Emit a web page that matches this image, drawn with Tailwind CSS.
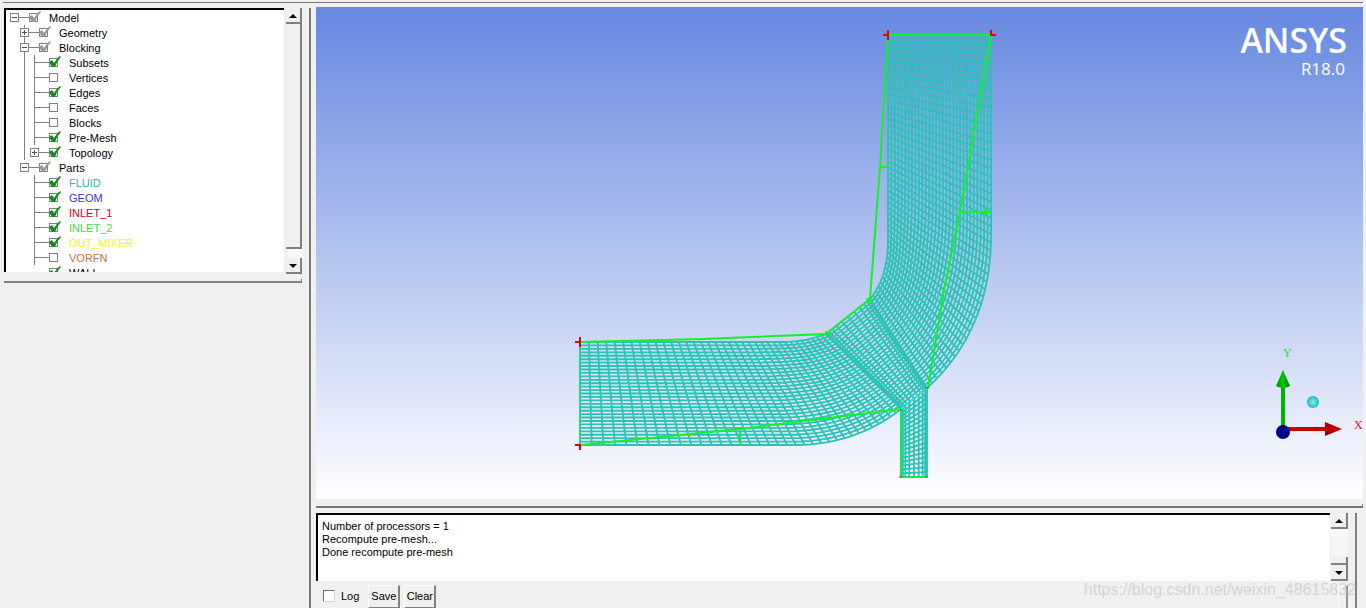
<!DOCTYPE html>
<html lang="en">

<head>
	<meta charset="UTF-8">
	<meta name="viewport" content="width=device-width, initial-scale=1.0">
	<title>Pre-mesh viewer</title>
	<script src="https://cdn.jsdelivr.net/npm/@tailwindcss/browser@4"></script>
</head>

<body class="flex flex-col h-screen overflow-hidden bg-[#f0f0f0] font-['Liberation_Sans',Arial,sans-serif] text-[11px] text-black">
	<div class="mt-0.5 mx-[3px] h-px shrink-0 bg-[#777777]"></div>
	<div class="flex flex-1 min-h-0 pt-1">

		<!-- Model tree -->
		<aside class="w-[298px] shrink-0 ml-1 mt-px">
			<div class="flex items-start gap-0.5">
				<div class="flex-1 h-[264px] overflow-hidden bg-white border-t-2 border-l-2 border-black">
					<ul id="tree"></ul>
				</div>
				<div class="flex flex-col w-4 h-[266px] bg-[#f7f7f7]">
					<button aria-label="Scroll up" class="flex items-center justify-center h-4 pt-0.5 bg-[#f0f0f0] border-r-2 border-b-2 border-[#808080]">
						<svg class="w-2 h-1" viewBox="0 0 8 4"><path d="M4 0L8 4H0z" /></svg>
					</button>
					<div class="h-[225px] bg-[#f0f0f0] border-r-2 border-b-2 border-[#808080]"></div>
					<button aria-label="Scroll down" class="flex items-center justify-center h-4 pt-0.5 mt-auto bg-[#f0f0f0] border-r-2 border-b-2 border-[#808080]">
						<svg class="w-2 h-1" viewBox="0 0 8 4"><path d="M0 0H8L4 4z" /></svg>
					</button>
				</div>
			</div>
			<div class="mt-[5px] h-1 border-b-2 border-r border-[#808080]"></div>
		</aside>

		<div class="w-0.5 ml-[7px] mt-px shrink-0 bg-[#777777]"></div>

		<main class="flex flex-col flex-1 min-w-0 ml-[5px] mr-[3px]">
			<!-- Graphics window -->
			<div class="relative flex-1 min-h-0 bg-linear-to-b/srgb from-[#6688e0] to-white">
				<svg class="block w-full h-full" viewBox="316 7 1047 492" preserveAspectRatio="xMaxYMid meet">
					<path id="mesh" fill="none" stroke="#2cc2b6" stroke-width="1.85" />
					<g fill="none" stroke="#14f02c" stroke-width="2">
						<path d="M888 35H991" />
						<path d="M888 35L880 167L870 299L826 334L703 339L580 342" />
						<path d="M991 35L960 212L944 290L928 388" />
						<path d="M580 445L740 429L901 409" />
						<path d="M901 409V477M901 477H927" stroke-width="1.5" />
						<path d="M580 342V445" stroke-width="1" stroke-dasharray="3 3" />
						<path d="M880 167H888M960 212H991M740 429V444" />
						<path d="M866 299H874M870 295V303M822 334H830M826 331V338" stroke-width="1.5" />
					</g>
					<path d="M984 208L991 212L984 216z" fill="#14f02c" />
					<path d="M901 409L927 388" stroke="#20f0f0" stroke-width="1.5" stroke-dasharray="4 2" />
					<path d="M883 35H888M888 30V40M991 30V35H996M575 342H580M580 337V347M575 445H580V450" fill="none" stroke="#e00010" stroke-width="2" />
					<path d="M925 388H929M899 477H902M926 477H928M900 410H902" stroke="#a03020" stroke-width="1" />

					<!-- Axis triad -->
					<defs>
						<radialGradient id="ball"><stop offset="0" stop-color="#7ff4f4" /><stop offset="1" stop-color="#28b4bc" /></radialGradient>
						<linearGradient id="ycone"><stop offset="0" stop-color="#009400" /><stop offset=".5" stop-color="#00c800" /><stop offset="1" stop-color="#007800" /></linearGradient>
						<linearGradient id="xcone" x2="0" y2="1"><stop offset="0" stop-color="#8c0000" /><stop offset=".5" stop-color="#cc0000" /><stop offset="1" stop-color="#780000" /></linearGradient>
					</defs>
					<path d="M1281 386H1285V430H1281z" fill="#00b400" />
					<path d="M1283 370L1290 386Q1283 390 1276 386z" fill="url(#ycone)" />
					<path d="M1286 427H1326V431H1286z" fill="#c80000" />
					<path d="M1325 422L1342 429L1325 436z" fill="url(#xcone)" />
					<circle cx="1283" cy="432" r="7" fill="#000088" />
					<circle cx="1313" cy="402" r="6" fill="url(#ball)" />
					<g font-family="Liberation Serif, serif" font-size="12">
						<text x="1283" y="357" fill="#20d840">Y</text>
						<text x="1354" y="429" fill="#e01020">X</text>
					</g>
				</svg>
				<div class="absolute top-2.5 right-4 text-right text-white font-['Open_Sans',sans-serif]">
					<div class="text-[34px] leading-[46px] font-semibold">ANSYS</div>
					<div class="text-[17px] leading-3 pr-0.5">R18.0</div>
				</div>
			</div>

			<div class="mt-[5px] h-1 shrink-0 border-b-2 border-r border-[#777777]"></div>

			<!-- Message log -->
			<div class="flex mt-[5px] h-[95px] shrink-0">
				<div class="flex-1 min-w-0">
					<div class="flex gap-px">
						<div class="flex-1 h-[68px] pt-[5px] pl-1 leading-[13px] bg-white border-t-2 border-l-2 border-black">
							<p>Number of processors = 1</p>
							<p>Recompute pre-mesh...</p>
							<p>Done recompute pre-mesh</p>
						</div>
						<div class="flex flex-col w-[17px] bg-[#f7f7f7]">
							<button aria-label="Scroll log up" class="flex items-center justify-center h-4 pt-0.5 bg-[#f0f0f0] border-r-2 border-b-2 border-[#808080]">
								<svg class="w-2 h-1" viewBox="0 0 8 4"><path d="M4 0L8 4H0z" /></svg>
							</button>
							<div class="h-2 mt-auto bg-[#f0f0f0] border-r-2 border-b-2 border-[#808080]"></div>
							<button aria-label="Scroll log down" class="flex items-center justify-center h-4 pt-0.5 bg-[#f0f0f0] border-r-2 border-b-2 border-[#808080]">
								<svg class="w-2 h-1" viewBox="0 0 8 4"><path d="M0 0H8L4 4z" /></svg>
							</button>
						</div>
					</div>
					<div class="flex mt-1 h-6">
						<label class="flex items-center gap-1.5 ml-[7px] mr-[9px] h-[22px]">
							<input type="checkbox" class="appearance-none w-3 h-3 bg-white border border-[#d8d8d8] border-t-[#707070] border-l-[#707070] checked:bg-[#808080]">
							<span>Log</span>
						</label>
						<button class="w-8 bg-[#f0f0f0] border border-white border-r-2 border-b-2 border-r-[#808080] border-b-[#808080]">Save</button>
						<button class="w-8 ml-1 bg-[#f0f0f0] border border-white border-r-2 border-b-2 border-r-[#808080] border-b-[#808080]">Clear</button>
						<div class="w-2.5 ml-auto border border-white border-r-2 border-r-[#909090] border-b-[#909090]"></div>
					</div>
				</div>
				<div class="w-0.5 ml-[7px] mr-1.5 bg-[#808080]"></div>
			</div>
		</main>
	</div>

	<div class="absolute right-2.5 bottom-2 text-[16px] leading-5 text-[#d4d4d4] pointer-events-none">https://blog.csdn.net/weixin_48615832</div>

	<script>
		// state: on = green tick, mixed = grey tick, off = empty box
		const model = {
			name: 'Model', state: 'mixed', open: true, children: [
				{ name: 'Geometry', state: 'mixed', open: false },
				{
					name: 'Blocking', state: 'mixed', open: true, children: [
						{ name: 'Subsets', state: 'on' },
						{ name: 'Vertices', state: 'off' },
						{ name: 'Edges', state: 'on' },
						{ name: 'Faces', state: 'off' },
						{ name: 'Blocks', state: 'off' },
						{ name: 'Pre-Mesh', state: 'on' },
						{ name: 'Topology', state: 'on', open: false }
					]
				},
				{
					name: 'Parts', state: 'mixed', open: true, children: [
						{ name: 'FLUID', state: 'on', color: 'text-[#30b8b8]' },
						{ name: 'GEOM', state: 'on', color: 'text-[#3838b8]' },
						{ name: 'INLET_1', state: 'on', color: 'text-[#c00808]' },
						{ name: 'INLET_2', state: 'on', color: 'text-[#48d848]' },
						{ name: 'OUT_MIXER', state: 'on', color: 'text-[#f4f410]' },
						{ name: 'VORFN', state: 'off', color: 'text-[#c07048]' },
						{ name: 'WALL', state: 'on' }
					]
				}
			]
		};

		function renderRow(node) {
			const hasBox = node.open !== undefined;
			const tick = node.state === 'off' ? '' :
				`<svg class="absolute left-0 -top-0.5 w-3 h-3 pointer-events-none" viewBox="0 0 12 12"><path d="M0 6L3 4L5 7Q7 3 11 0L12 1Q8 5 6 11H3z" fill="${node.state === 'on' ? '#108c18' : '#989898'}"/></svg>`;
			const box = hasBox ?
				`<button aria-label="Toggle ${node.name}" class="-ml-[5px] w-[9px] h-[9px] bg-white border border-[#808080]"><svg class="block w-[7px] h-[7px]" viewBox="0 0 7 7"><path fill="#505050" d="${node.open ? 'M1 3H6V4H1z' : 'M1 3H3V1H4V3H6V4H4V6H3V4H1z'}"/></svg></button><span class="w-2.5 h-px bg-[#808080]"></span>` :
				'<span class="w-3.5 h-px bg-[#808080]"></span>';
			return `<div class="flex items-center h-[15px] whitespace-nowrap">${box}
				<label class="flex items-center gap-[11px]"><span class="relative flex"><input type="checkbox" ${node.state === 'on' ? 'checked' : ''} class="appearance-none w-[9px] h-[9px] bg-white border border-[#808080]">${tick}</span>
				<span class="pt-px ${node.color || 'text-black'}">${node.name}</span></label></div>`;
		}

		function renderNode(node, isEnd) {
			const kids = node.children ?
				`<ul class="ml-[9px]">${node.children.map((c, i) => renderNode(c, i === node.children.length - 1)).join('')}</ul>` : '';
			return `<li class="border-l ${isEnd ? 'border-transparent' : 'border-[#808080]'}">${renderRow(node)}${kids}</li>`;
		}
		const tree = document.getElementById('tree');
		tree.className = 'ml-2';
		tree.innerHTML = renderNode(model, true);

		// Mesh: each block is swept between two edges, every edge a sampled polyline
		function edge(straightFrom, straightTo, ctrl, end) {
			const pts = [straightFrom];
			for (let i = 0; i <= 40; i++) {
				const t = i / 40, u = 1 - t;
				pts.push([0, 1].map(k => u * u * straightTo[k] + 2 * u * t * ctrl[k] + t * t * end[k]));
			}
			return pts;
		}

		function at(pts, t) {
			const seg = pts.slice(1).map((p, i) => Math.hypot(p[0] - pts[i][0], p[1] - pts[i][1]));
			let d = t * seg.reduce((a, b) => a + b, 0);
			for (let i = 0; i < seg.length; i++) {
				if (d <= seg[i] || i === seg.length - 1) {
					const f = seg[i] ? Math.min(1, d / seg[i]) : 0;
					return [0, 1].map(k => pts[i][k] + (pts[i + 1][k] - pts[i][k]) * f);
				}
				d -= seg[i];
			}
		}

		function block(a, b, along, across) {
			const grid = along.map(t => {
				const p = at(a, t), q = at(b, t);
				return across.map(s => [p[0] + (q[0] - p[0]) * s, p[1] + (q[1] - p[1]) * s]);
			});
			const line = pts => 'M' + pts.map(p => p[0].toFixed(1) + ' ' + p[1].toFixed(1)).join('L');
			return grid.map(line).join('') + across.map((s, j) => line(grid.map(r => r[j]))).join('');
		}
		const even = n => Array.from({ length: n + 1 }, (_, i) => i / n);
		const towardEnd = (n, k) => even(n).map(t => (1 + k) * t - k * t * t);
		const bothEnds = (n, k) => even(n).map(t => t - k * Math.sin(2 * Math.PI * t) / (2 * Math.PI));

		const upIn = edge([888, 35], [888, 240], [888, 278], [870, 299]);
		const upOut = edge([991, 35], [991, 235], [991, 330], [927, 388]);
		const leftIn = edge([580, 342], [780, 342], [806, 342], [826, 334]);
		const leftOut = edge([580, 445], [795, 445], [855, 445], [901, 409]);
		document.getElementById('mesh').setAttribute('d',
			block(upIn, upOut, towardEnd(46, 0.15), even(30)) +
			block(leftIn, leftOut, towardEnd(36, 0.3), even(30)) +
			block([[826, 334], [870, 299]], [[901, 409], [927, 388]], bothEnds(12, 0.7), even(30)) +
			block([[901, 409], [901, 477]], [[927, 388], [927, 477]], even(18), bothEnds(8, 0.5)));
	</script>
</body>

</html>
